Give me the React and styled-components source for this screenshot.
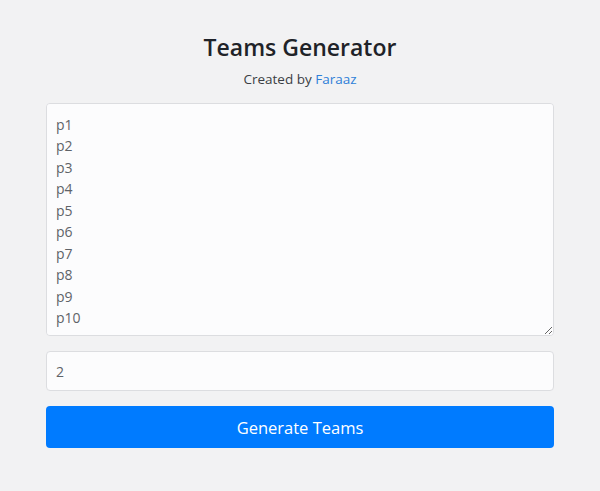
import React, { useState } from "react";
import styled, { createGlobalStyle } from "styled-components";

const Global = createGlobalStyle`
  html, body { margin: 0; padding: 0; background: #f2f2f3; }
  body { font-family: "Open Sans", "Noto Sans", sans-serif; color: #212529; }
  * { box-sizing: border-box; }
`;

const Page = styled.main`
  width: 600px;
  min-height: 491px;
  padding: 30px 46px 0;
  display: flex;
  flex-direction: column;
  align-items: stretch;
`;

const Title = styled.h1`
  margin: 0;
  text-align: center;
  font-size: 23px;
  font-weight: 600;
  line-height: 34px;
  color: #1f2328;
`;

const Subtitle = styled.p`
  margin: 4px 0 0;
  text-align: center;
  font-size: 13.5px;
  line-height: 22px;
  color: #3a3f44;
`;

const Link = styled.a`
  color: #2f7fd8;
  text-decoration: none;
`;

const Form = styled.form`
  margin-top: 13px;
  display: flex;
  flex-direction: column;
  gap: 15px;
`;

const Area = styled.textarea`
  width: 100%;
  height: 233px;
  padding: 10px 9px;
  font-family: inherit;
  font-size: 14px;
  line-height: 21.45px;
  color: #5f6368;
  background: #fcfcfd;
  border: 1px solid #dcdde0;
  border-radius: 4px;
  resize: vertical;
  outline: none;
`;

const Input = styled.input`
  width: 100%;
  height: 40px;
  padding: 0 9px;
  font-family: inherit;
  font-size: 14px;
  color: #5f6368;
  background: #fcfcfd;
  border: 1px solid #dcdde0;
  border-radius: 4px;
  outline: none;
`;

const Button = styled.button`
  width: 100%;
  height: 42px;
  border: none;
  border-radius: 4px;
  background: #007bff;
  color: #fff;
  font-family: inherit;
  font-size: 16.5px;
  cursor: pointer;
`;

export default function App() {
  const [names, setNames] = useState(
    ["p1", "p2", "p3", "p4", "p5", "p6", "p7", "p8", "p9", "p10"].join("\n")
  );
  const [count, setCount] = useState("2");
  return (
    <>
      <Global />
      <Page>
        <Title>Teams Generator</Title>
        <Subtitle>
          Created by <Link href="#">Faraaz</Link>
        </Subtitle>
        <Form onSubmit={(e) => e.preventDefault()}>
          <Area value={names} onChange={(e) => setNames(e.target.value)} />
          <Input value={count} onChange={(e) => setCount(e.target.value)} />
          <Button type="submit">Generate Teams</Button>
        </Form>
      </Page>
    </>
  );
}
